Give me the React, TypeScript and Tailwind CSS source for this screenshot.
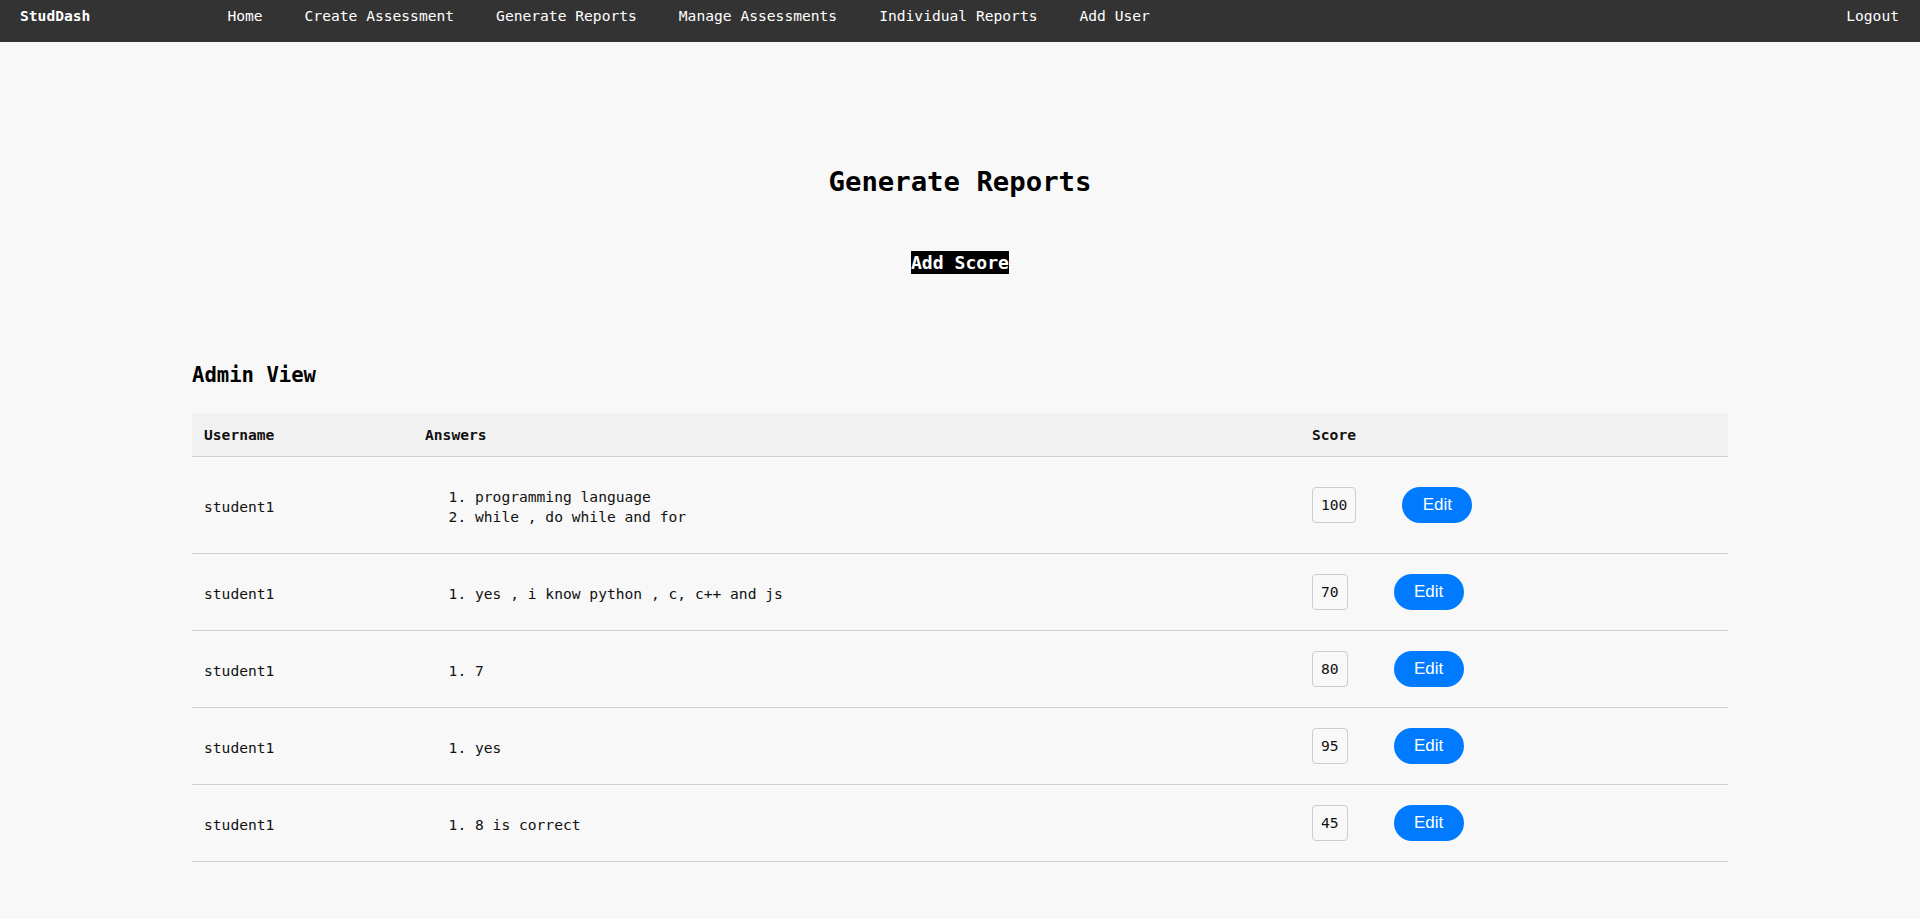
const navLinks = [
  "Home",
  "Create Assessment",
  "Generate Reports",
  "Manage Assessments",
  "Individual Reports",
  "Add User",
];

interface ScoreRow {
  id: number;
  username: string;
  answers: string[];
  score: number;
}

const rows: ScoreRow[] = [
  {
    id: 1,
    username: "student1",
    answers: ["programming language", "while , do while and for"],
    score: 100,
  },
  { id: 2, username: "student1", answers: ["yes , i know python , c, c++ and js"], score: 70 },
  { id: 3, username: "student1", answers: ["7"], score: 80 },
  { id: 4, username: "student1", answers: ["yes"], score: 95 },
  { id: 5, username: "student1", answers: ["8 is correct"], score: 45 },
];

const mono = "font-['DejaVu_Sans_Mono','Liberation_Mono',monospace]";
const thClasses = "px-3 py-3 text-left font-bold leading-[19px]";
const textCell = "px-3 pt-[14px] pb-[10px] align-middle";

const App = () => {
  return (
    <div className={`min-h-screen bg-[#f8f8f8] text-[14.62px] text-black ${mono}`}>
      <nav className="flex h-[42px] items-start bg-[#333333] pl-5 pr-[21px] pt-[6px] leading-5 text-white">
        <span className="font-bold">StudDash</span>
        <ul className="ml-[137px] flex gap-[42px]">
          {navLinks.map((link) => (
            <li key={link}>
              <a href="#" className="whitespace-nowrap">
                {link}
              </a>
            </li>
          ))}
        </ul>
        <a href="#" className="ml-auto">
          Logout
        </a>
      </nav>

      <main className="pt-[124px]">
        <h1 className="text-center text-[27.3px] font-bold leading-8">Generate Reports</h1>
        <div className="mt-[53px] flex justify-center">
          <button className="h-[23px] bg-black text-[18.1px] font-bold leading-[23px] text-white">
            Add Score
          </button>
        </div>

        <section className="mx-auto mt-[89px] w-[80%] pb-14">
          <h2 className="text-[20.6px] font-bold leading-6">Admin View</h2>
          <table className="mt-[26px] w-full table-fixed border-collapse text-[#111]">
            <thead>
              <tr className="border-b border-[#cfcfcf] bg-[#f2f2f2]">
                <th className={`${thClasses} w-[221px]`}>Username</th>
                <th className={`${thClasses} w-[887px]`}>Answers</th>
                <th className={thClasses}>Score</th>
              </tr>
            </thead>
            <tbody>
              {rows.map((row) => (
                <tr key={row.id} className="border-b border-[#cfcfcf] leading-5">
                  <td className={textCell}>{row.username}</td>
                  <td className={textCell}>
                    <ol className="my-4 list-outside list-decimal pl-[50px]">
                      {row.answers.map((answer) => (
                        <li key={answer}>{answer}</li>
                      ))}
                    </ol>
                  </td>
                  <td className="px-3 py-3 align-middle">
                    <div className="flex items-center">
                      <span className="flex h-9 items-center rounded border border-[#cccccc] bg-[#f8f8f8] px-2">
                        {row.score}
                      </span>
                      <button className="ml-[46px] h-9 w-[70px] rounded-full bg-[#007bff] font-['Liberation_Sans',Arial,sans-serif] text-[17px] text-white">
                        Edit
                      </button>
                    </div>
                  </td>
                </tr>
              ))}
            </tbody>
          </table>
        </section>
      </main>
    </div>
  );
};

export default App;
